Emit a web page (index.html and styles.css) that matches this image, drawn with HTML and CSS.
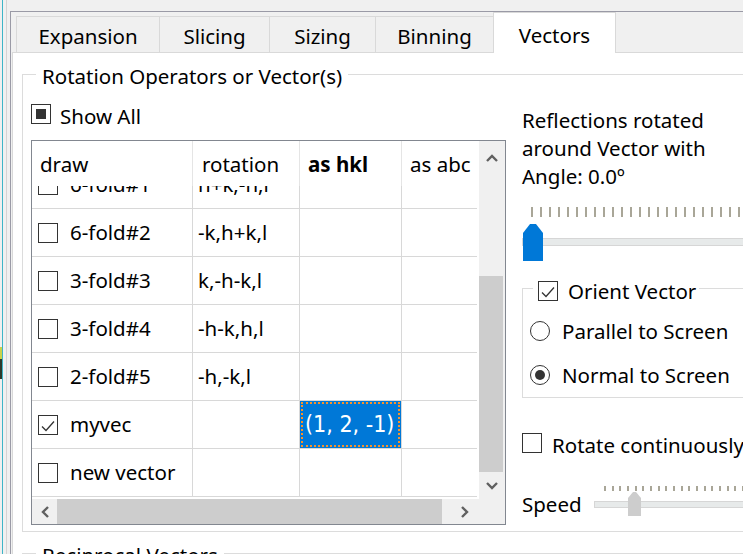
FILE: index.html
```html
<!DOCTYPE html>
<html>
<head>
<meta charset="utf-8">
<link rel="stylesheet" href="styles.css">
</head>
<body>
<div class="screen">
  <div class="edge"><span class="edge-mark"></span></div>
  <div class="frame">
    <div class="tabs">
      <div class="tab tab-expansion">Expansion</div>
      <div class="tab tab-slicing">Slicing</div>
      <div class="tab tab-sizing">Sizing</div>
      <div class="tab tab-binning">Binning</div>
      <div class="tab tab-vectors active">Vectors</div>
    </div>
    <div class="pane">
      <fieldset class="group">
        <legend class="group-title">Rotation Operators or Vector(s)</legend>
        <div class="group-body">
          <div class="left-col">
            <div class="check-row showall"><span class="cb partial"></span><span class="label">Show All</span></div>
            <div class="table">
              <div class="tmain">
                <div class="thead">
                  <div class="th c1">draw</div>
                  <div class="th c2">rotation</div>
                  <div class="th c3 bold">as hkl</div>
                  <div class="th c4">as abc</div>
                </div>
                <div class="tview">
                  <div class="tbody">
                    <div class="tr">
                      <div class="td c1"><span class="cb"></span><span>6-fold#1</span></div>
                      <div class="td c2">h+k,-h,l</div>
                      <div class="td c3"></div>
                      <div class="td c4"></div>
                    </div>
                    <div class="tr">
                      <div class="td c1"><span class="cb"></span><span>6-fold#2</span></div>
                      <div class="td c2">-k,h+k,l</div>
                      <div class="td c3"></div>
                      <div class="td c4"></div>
                    </div>
                    <div class="tr">
                      <div class="td c1"><span class="cb"></span><span>3-fold#3</span></div>
                      <div class="td c2">k,-h-k,l</div>
                      <div class="td c3"></div>
                      <div class="td c4"></div>
                    </div>
                    <div class="tr">
                      <div class="td c1"><span class="cb"></span><span>3-fold#4</span></div>
                      <div class="td c2">-h-k,h,l</div>
                      <div class="td c3"></div>
                      <div class="td c4"></div>
                    </div>
                    <div class="tr">
                      <div class="td c1"><span class="cb"></span><span>2-fold#5</span></div>
                      <div class="td c2">-h,-k,l</div>
                      <div class="td c3"></div>
                      <div class="td c4"></div>
                    </div>
                    <div class="tr">
                      <div class="td c1"><span class="cb"><svg viewBox="0 0 20 20" width="20" height="20"><polyline points="4,11.5 8,15.5 16,6.5" fill="none" stroke="#333" stroke-width="1.3"/></svg></span><span>myvec</span></div>
                      <div class="td c2"></div>
                      <div class="td c3 selected"><div class="edit">(1, 2, -1)</div></div>
                      <div class="td c4"></div>
                    </div>
                    <div class="tr">
                      <div class="td c1"><span class="cb"></span><span>new vector</span></div>
                      <div class="td c2"></div>
                      <div class="td c3"></div>
                      <div class="td c4"></div>
                    </div>
                  </div>
                </div>
              </div>
              <div class="vscroll">
                <div class="sb-btn up"><svg viewBox="0 0 12 8" width="12" height="8"><polyline points="1,7 6,2 11,7" fill="none" stroke="#606060" stroke-width="2.4"/></svg></div>
                <div class="vtrack"><div class="vthumb"></div></div>
                <div class="sb-btn down"><svg viewBox="0 0 12 8" width="12" height="8"><polyline points="1,1 6,6 11,1" fill="none" stroke="#606060" stroke-width="2.4"/></svg></div>
              </div>
              <div class="hscroll">
                <div class="sb-btn left"><svg viewBox="0 0 8 12" width="8" height="12"><polyline points="7,1 2,6 7,11" fill="none" stroke="#606060" stroke-width="2.4"/></svg></div>
                <div class="htrack"><div class="hthumb"></div></div>
                <div class="sb-btn right"><svg viewBox="0 0 8 12" width="8" height="12"><polyline points="1,1 6,6 1,11" fill="none" stroke="#606060" stroke-width="2.4"/></svg></div>
              </div>
              <div class="corner"></div>
            </div>
          </div>
          <div class="right-col">
            <div class="angle-text">Reflections rotated<br>around Vector with<br>Angle: 0.0º</div>
            <div class="slider angle-slider">
              <div class="ticks"></div>
              <div class="track"></div>
              <svg class="handle" viewBox="0 0 20 37" width="20" height="37"><polygon points="0,9 7,0 13,0 20,9 20,37 0,37" fill="#0078d7"/></svg>
            </div>
            <fieldset class="orient">
              <legend class="orient-title"><span class="cb"><svg viewBox="0 0 20 20" width="20" height="20"><polyline points="4,11.5 8,15.5 16,6.5" fill="none" stroke="#333" stroke-width="1.3"/></svg></span><span>Orient Vector</span></legend>
              <div class="orient-body">
                <div class="radio-row"><span class="radio"></span><span class="label">Parallel to Screen</span></div>
                <div class="radio-row"><span class="radio on"><span class="dot"></span></span><span class="label">Normal to Screen</span></div>
              </div>
            </fieldset>
            <div class="check-row rotate"><span class="cb"></span><span class="label">Rotate continuously</span></div>
            <div class="speed-row">
              <span class="speed-label">Speed</span>
              <div class="slider speed-slider">
                <div class="ticks"></div>
                <div class="track"></div>
                <svg class="handle" viewBox="0 0 13 24" width="13" height="24"><polygon points="0,6 5,0 8,0 13,6 13,24 0,24" fill="#cdcdcd"/></svg>
              </div>
            </div>
          </div>
        </div>
      </fieldset>
      <fieldset class="group next">
        <legend class="group-title">Reciprocal Vectors</legend>
      </fieldset>
    </div>
  </div>
</div>
</body>
</html>
```

FILE: styles.css
```css
* { box-sizing: border-box; }
html, body { margin: 0; padding: 0; }
body {
  width: 743px;
  height: 554px;
  overflow: hidden;
  background: #f0f0f0;
  font-family: "Noto Sans", "Open Sans", sans-serif;
  font-size: 20.5px;
  color: #000;
}
.screen { display: flex; height: 554px; }

.edge {
  flex: 0 0 10px;
  display: flex;
  flex-direction: column;
  background: linear-gradient(to right, #f0f0f0 0 2px, #3db5c7 2px 3px, #f0f0f0 3px 6px, #d4d4d4 6px 7px, #f0f0f0 7px 10px);
}
.edge-mark {
  display: block;
  width: 2px;
  height: 32px;
  margin-top: 347px;
  background: linear-gradient(#c9d24a 0 12px, #2d3a2a 12px 32px);
}

.frame {
  flex: 0 0 760px;
  margin-top: 11px;
  border-top: 1px solid #9a9aa6;
  border-left: 1px solid #9a9aa6;
  display: flex;
  flex-direction: column;
}
.tabs {
  display: flex;
  align-items: flex-end;
  height: 41px;
  padding-left: 5px;
}
.tab {
  height: 36px;
  border: 1px solid #d9d9d9;
  border-bottom: none;
  background: #f0f0f0;
  text-align: center;
  padding-top: 4px;
  line-height: 31px;
  margin-left: -1px;
  white-space: nowrap;
}
.tab-expansion { width: 144px; margin-left: 0; }
.tab-slicing { width: 111px; }
.tab-sizing { width: 107px; }
.tab-binning { width: 119px; }
.tab-vectors { width: 123px; }
.tab.active {
  position: relative;
  z-index: 1;
  height: 41px;
  margin-bottom: -1px;
  background: #fff;
  padding-top: 6px;
  line-height: 32px;
}

.pane {
  flex: 1;
  margin-left: 1px;
  border-top: 1px solid #d9d9d9;
  border-left: 1px solid #d9d9d9;
  background: #fff;
  padding: 7px 0 0 9px;
}

.group {
  margin: 0;
  min-width: 0;
  width: 760px;
  border: 1px solid #dcdcdc;
  padding: 0 0 6px 8px;
}
.group-title {
  margin-left: 5px;
  padding: 4px 6px 0 6px;
  height: 28px;
  line-height: 24px;
  white-space: nowrap;
}
.group.next { margin-top: 7px; height: 60px; }

.group-body { display: flex; padding-top: 12px; }
.left-col { flex: 0 0 475px; }
.right-col { flex: 0 0 260px; margin-left: 16px; padding-top: 6px; }

.check-row {
  display: flex;
  align-items: center;
  height: 28px;
}
.label {
  padding-top: 4px;
  line-height: 24px;
  white-space: nowrap;
}
.showall { gap: 9px; }
.rotate { gap: 10px; margin-top: 31px; }

.cb {
  flex: 0 0 20px;
  width: 20px;
  height: 20px;
  border: 1px solid #333;
  background: #fff;
  display: flex;
  align-items: center;
  justify-content: center;
}
.cb svg { display: block; margin: -1px; }
.cb.partial::after {
  content: "";
  width: 10px;
  height: 10px;
  background: #333;
}

/* table */
.table {
  margin-top: 12px;
  width: 475px;
  height: 385px;
  border: 1px solid #828790;
  display: grid;
  grid-template-columns: 447px 26px;
  grid-template-rows: 358px 25px;
  background: #fff;
}
.tmain { overflow: hidden; display: flex; flex-direction: column; }
.thead { display: flex; height: 45px; flex: 0 0 45px; }
.th {
  padding-top: 2px;
  line-height: 43px;
  padding-left: 8px;
  white-space: nowrap;
  overflow: hidden;
}
.th.c1, .th.c2, .th.c3 { border-right: 1px solid #e5e5e5; }
.th.c2 { padding-left: 9px; }
.bold { font-weight: 700; }
.c1 { flex: 0 0 161px; }
.c2 { flex: 0 0 107px; }
.c3 { flex: 0 0 102px; }
.c4 { flex: 0 0 75px; }
.tview { flex: 1; overflow: hidden; }
.tbody { margin-top: -25px; width: 445px; }
.tr { display: flex; height: 48px; border-bottom: 1px solid #d8d8d8; }
.td {
  height: 47px;
  line-height: 47px;
  white-space: nowrap;
  overflow: hidden;
}
.td.c1, .td.c2, .td.c3 { border-right: 1px solid #d8d8d8; }
.td.c1 { display: flex; align-items: center; gap: 12px; padding-left: 6px; }
.td.c2 { padding-left: 5px; }
.td.selected { background: #0078d7; padding: 1px; }
.edit {
  height: 100%;
  border: 2px dotted #f7922a;
  color: #fff;
  font-family: "DejaVu Sans Condensed", "DejaVu Sans", sans-serif;
  font-size: 23px;
  line-height: 41px;
  padding-left: 2px;
  white-space: nowrap;
}

.vscroll {
  grid-row: 1 / 2;
  grid-column: 2 / 3;
  background: #f0f0f0;
  display: flex;
  flex-direction: column;
}
.sb-btn { display: flex; align-items: center; justify-content: center; }
.sb-btn svg { display: block; }
.sb-btn.up { flex: 0 0 34px; }
.sb-btn.down { flex: 0 0 26px; }
.vtrack { flex: 1; }
.vthumb { margin-top: 101px; height: 196px; width: 24px; background: #cdcdcd; }

.hscroll {
  grid-row: 2 / 3;
  grid-column: 1 / 2;
  background: #f0f0f0;
  display: flex;
}
.sb-btn.left { flex: 0 0 25px; }
.sb-btn.right { flex: 0 0 28px; }
.htrack { flex: 1; }
.hthumb { width: 385px; height: 100%; background: #cdcdcd; }
.corner { grid-row: 2 / 3; grid-column: 2 / 3; background: #f0f0f0; }

/* right column */
.angle-text { line-height: 28px; white-space: nowrap; }
.slider { position: relative; }
.angle-slider { margin-top: 17px; height: 55px; }
.angle-slider .ticks {
  margin-left: 9px;
  height: 10px;
  background: repeating-linear-gradient(to right, #a9a698 0 2px, transparent 2px 9px);
}
.track {
  height: 8px;
  background: #e7eaea;
  border: 1px solid #d6d6d6;
}
.angle-slider .track { margin-top: 21px; }
.handle { position: absolute; display: block; }
.angle-slider .handle { left: 1px; top: 17px; }

.orient {
  margin: 12px 0 0 0;
  min-width: 0;
  border: 1px solid #dcdcdc;
  padding: 0 0 10px 7px;
  width: 260px;
}
.orient-title {
  margin-left: 3px;
  padding: 6px 3px 0 5px;
  height: 28px;
  line-height: 22px;
  display: flex;
  align-items: center;
  gap: 10px;
  white-space: nowrap;
}
.orient-body { padding-top: 13px; display: flex; flex-direction: column; gap: 16px; }
.radio-row { display: flex; align-items: center; gap: 12px; height: 28px; }
.radio {
  flex: 0 0 20px;
  width: 20px;
  height: 20px;
  border: 1px solid #333;
  border-radius: 50%;
  display: flex;
  align-items: center;
  justify-content: center;
}
.radio-row .radio { margin-top: 4px; }
.dot { width: 10px; height: 10px; border-radius: 50%; background: #333; }

.speed-row { display: flex; align-items: center; margin-top: 29px; }
.speed-label { flex: 0 0 72px; padding-top: 4px; line-height: 24px; }
.speed-slider { flex: 0 0 200px; height: 31px; }
.speed-slider .ticks {
  margin-left: 10px;
  height: 5px;
  background: repeating-linear-gradient(to right, #a9a698 0 2px, transparent 2px 7.67px);
}
.speed-slider .track { margin-top: 10px; height: 7px; }
.speed-slider .handle { left: 34px; top: 6px; }
```
